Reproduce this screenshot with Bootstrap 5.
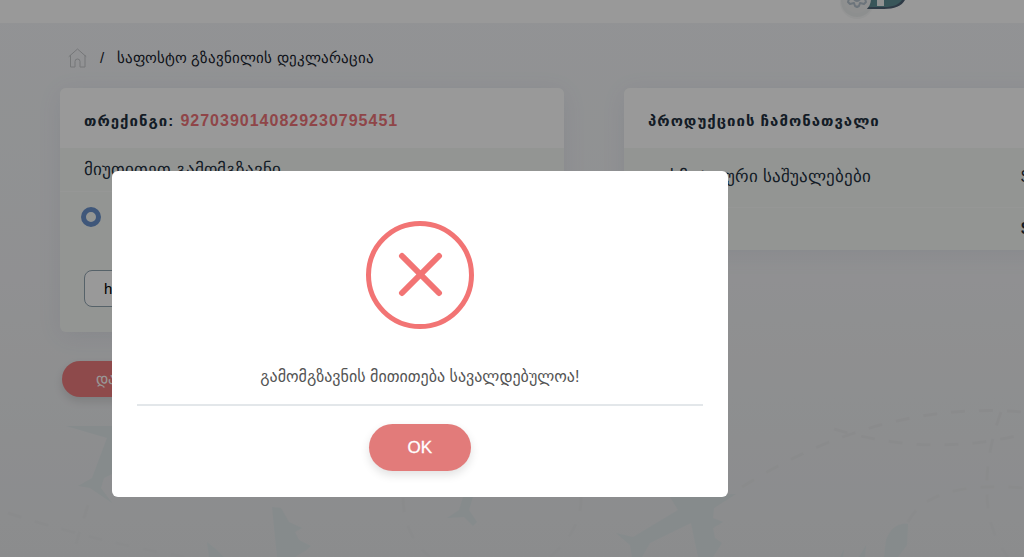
<!DOCTYPE html>
<html lang="ka">
<head>
<meta charset="utf-8">
<meta name="viewport" content="width=device-width, initial-scale=1">
<title>საფოსტო გზავნილის დეკლარაცია</title>
<link href="https://cdn.jsdelivr.net/npm/bootstrap@5.3.0/dist/css/bootstrap.min.css" rel="stylesheet">
<style>
body{font-family:"Liberation Sans";font-size:17px;line-height:24px;color:#22303e;overflow:hidden;min-height:100vh;background:linear-gradient(#f3f5f8,#f0f1f3 50%,#e8eaec)}
.topbar{height:23px;background:#fff;padding-right:116px}
.brand-art{display:block;width:72px;height:40px}
.scenery{position:absolute;left:0;bottom:0;width:100%;z-index:-1}
.page-body{padding:24px 0 0 60px}
.crumbs{font-size:15px;line-height:22px;color:#16212c;margin-bottom:19px;padding-left:8px}
.home-link{margin-right:13px}
.panels{display:grid;grid-template-columns:1fr 1fr;gap:60px;align-items:start;margin-right:-104px}
.panel{background:#f6f9f6;border-radius:6px;box-shadow:0 4px 24px rgba(90,100,150,.09)}
.panel-title,.message{font-family:"Liberation Sans","DejaVu Sans",sans-serif}
.panel-title{background:#fff;border-radius:6px 6px 0 0;padding:21px 24px 15px;font-size:15px;line-height:24px;font-weight:700;letter-spacing:1px;margin:0}
.track-no{font-size:16px;color:#ef7478;margin-left:1px}
.ask{padding:10px 24px 9px;border-bottom:1px solid #fafcfa}
.pick{appearance:none;width:20px;height:20px;border:5px solid #6a92cb;border-radius:50%;margin:15px 0 0 21px;display:block}
.field{padding:43px 24px 25px}
.url-box{display:block;width:100%;height:37px;border:1px solid #8fa3b0;border-radius:8px;background:#fff;padding:0 19px;font-size:15px;color:#000}
.goods{width:100%;margin:0}
.goods td{border:0;padding:0 24px;height:59px}
.goods tr+tr td{height:43px;border-top:1px solid #fafcfa}
.goods td:last-child{width:107px;padding:0}
.pill{border:0;border-radius:24px;color:#fff;box-shadow:0 4px 10px rgba(0,0,0,.12)}
.save{background:#ed7c7e;height:36px;padding:0 34px;margin:29px 0 0 2px;font-size:15px}
.okay{background:#e27b7a;height:47px;width:102px;font-size:17px;-webkit-text-stroke:.3px #fff}
.veil{background:rgba(0,0,0,.4)}
.alert-wrap{width:82%}
.alert-box{max-width:616px;margin:171px auto 0}
.alert-box .modal-content{background:#fff;border:0;border-radius:6px;padding:50px 25px 26px;color:#545454}
.message{font-size:16px;margin:36px 0 15px}
.rule{border-top:2px solid #e3e7ea;padding-top:18px}
</style>
</head>
<body>
<header class="topbar d-flex justify-content-end">
  <svg class="brand-art" viewBox="0 0 72 40" aria-hidden="true">
    <path d="M26 0H69C66 6 58 9 48 9H26Z" fill="#4d6275"/>
    <path d="M26 0H66C62 5 57 7 48 7H26Z" fill="#5f9097"/>
    <path d="M41 0H48V6H41Z" fill="#f2f4f4"/>
    <circle cx="21" cy="2" r="17" fill="#66707a" opacity=".05"/>
    <circle cx="21" cy="1" r="16" fill="#66707a" opacity=".07"/>
    <circle cx="21" cy="-1" r="14" fill="#eef0f1"/>
    <path d="M13-1L12 2 14 4 18 3 19 6 21 7 23 6 24 3 28 4 30 2 29-1" fill="none" stroke="#b4c2cd" stroke-width="2" stroke-linejoin="round"/>
    <path d="M17-2Q21 4 25-2" fill="none" stroke="#b4c2cd" stroke-width="2"/>
  </svg>
</header>

<svg class="scenery" viewBox="0 0 1024 177" aria-hidden="true">
  <g fill="#e0e8ea">
    <path d="M66 46H120V90L104 98 101 108 112 123 90 108 78 106 92 98 107 58Z"/>
    <path d="M272 127L281 128 289 142 302 148 295 152 299 160 311 166 305 171 295 177H277Z"/>
    <path d="M207 162L217 170 224 177H209Z"/>
    <path d="M463 117H473L469 130 477 142 473 146 464 137 447 138 459 130Z"/>
    <path d="M670 117L736 114 714 128 713 138 723 142 713 148 715 158 722 163 713 177H698L691 143 650 163 642 177H632L630 165 616 153 633 157 678 130Z"/>
    <path d="M884 177L886 160Q893 142 908 144L907 165 898 177ZM840 177L844 169 843 177ZM859 177L866 165 865 177Z"/>
  </g>
  <g fill="none" stroke="#e7e8ea" stroke-width="3" stroke-dasharray="14 14">
    <path d="M8 133Q90 160 185 177M88 125L76 164"/>
    <path d="M403 118Q404 156 430 177M581 117Q582 150 550 177"/>
    <path d="M742 107Q880 20 1024 32M834 49Q930 78 1024 54M908 142Q930 100 1024 108M1001 32Q980 90 990 140Q996 162 1008 177"/>
  </g>
</svg>

<main class="page-body">
  <nav class="crumbs d-flex align-items-center" aria-label="breadcrumb">
    <a href="#" aria-label="მთავარი" class="home-link d-flex">
      <svg width="19" height="20" viewBox="0 0 19 20" fill="none" stroke="#c4c6c9" stroke-linejoin="round" stroke-linecap="round"><path d="M1 8.500L9.500 1 18 8.500M2.500 7.500V19H7V13.500Q7 11 9.500 11T12 13.500V19H17V7.500"/></svg>
    </a>
    <span class="home-link">/</span>
    <span>საფოსტო გზავნილის დეკლარაცია</span>
  </nav>

  <div class="panels">
    <div>
      <section class="panel">
        <h2 class="panel-title">თრექინგი: <span class="track-no">9270390140829230795451</span></h2>
        <div class="ask">მიუთითეთ გამომგზავნი</div>
        <input class="pick" type="radio" name="sender" aria-label="გამომგზავნი" checked>
        <div class="field">
          <input class="url-box" type="text" value="h" aria-label="ბმული">
        </div>
      </section>
      <button class="pill save" type="button">დადასტურება</button>
    </div>
    <section class="panel">
      <h2 class="panel-title">პროდუქციის ჩამონათვალი</h2>
      <table class="goods align-middle">
        <tbody>
          <tr><td>კოსმეტიკური საშუალებები</td><td>$</td></tr>
          <tr><td></td><td class="fw-bold">$</td></tr>
        </tbody>
      </table>
    </section>
  </div>
</main>

<div class="veil position-fixed top-0 start-0 w-100 h-100">
  <div class="alert-wrap">
    <div class="alert-box" role="alertdialog" aria-modal="true" aria-describedby="msg">
      <div class="modal-content text-center">
        <svg class="mx-auto" width="108" height="108" viewBox="0 0 108 108" fill="none" stroke="#f27474" aria-hidden="true">
          <circle cx="54" cy="54" r="51.500" stroke-width="5"/>
          <path d="M36 35L73 72M73 35L36 72" stroke-width="6" stroke-linecap="round"/>
        </svg>
        <p class="message" id="msg">გამომგზავნის მითითება სავალდებულოა!</p>
        <div class="rule">
          <button class="pill okay" type="button">OK</button>
        </div>
      </div>
    </div>
  </div>
</div>
<script src="https://cdn.jsdelivr.net/npm/bootstrap@5.3.0/dist/js/bootstrap.bundle.min.js"></script>
</body>
</html>
